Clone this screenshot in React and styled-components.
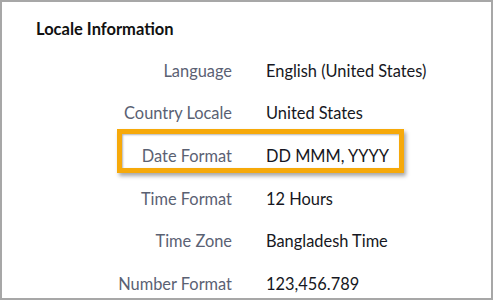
import React from "react";
import styled, { createGlobalStyle } from "styled-components";

const Global = createGlobalStyle`
  body {
    margin: 0;
    background: #ffffff;
    font-family: Lato, "Open Sans", sans-serif;
  }
`;

const Panel = styled.div`
  width: 493px;
  height: 300px;
  box-sizing: border-box;
  border: 2px solid #a7a7a7;
  padding: 16px 0 0 34px;
  overflow: hidden;
  background: #fff;
`;

const Title = styled.h2`
  margin: 0 0 9px 0;
  font-size: 16.5px;
  line-height: 22px;
  font-weight: 700;
  color: #111;
`;

const List = styled.div`
  display: flex;
  flex-direction: column;
`;

const Row = styled.div`
  position: relative;
  display: flex;
  align-items: center;
  height: 42.6px;
  font-size: 16.4px;
`;

const Label = styled.span`
  width: 196px;
  text-align: right;
  color: #5a6173;
`;

const Value = styled.span`
  margin-left: 34px;
  color: #161722;
`;

const Highlight = styled.div`
  position: absolute;
  left: 81px;
  top: -5px;
  width: 287px;
  height: 44px;
  box-sizing: border-box;
  border: 5px solid #f6a90a;
  box-shadow: 2px 3px 4px rgba(0, 0, 0, 0.35),
    inset 1px 1px 2px rgba(0, 0, 0, 0.3);
  pointer-events: none;
`;

const rows = [
  ["Language", "English (United States)"],
  ["Country Locale", "United States"],
  ["Date Format", "DD MMM, YYYY", true],
  ["Time Format", "12 Hours"],
  ["Time Zone", "Bangladesh Time"],
  ["Number Format", "123,456.789"],
];

export default function App() {
  return (
    <>
      <Global />
      <Panel>
        <Title>Locale Information</Title>
        <List>
          {rows.map(([label, value, marked]) => (
            <Row key={label}>
              <Label>{label}</Label>
              <Value>{value}</Value>
              {marked && <Highlight />}
            </Row>
          ))}
        </List>
      </Panel>
    </>
  );
}
